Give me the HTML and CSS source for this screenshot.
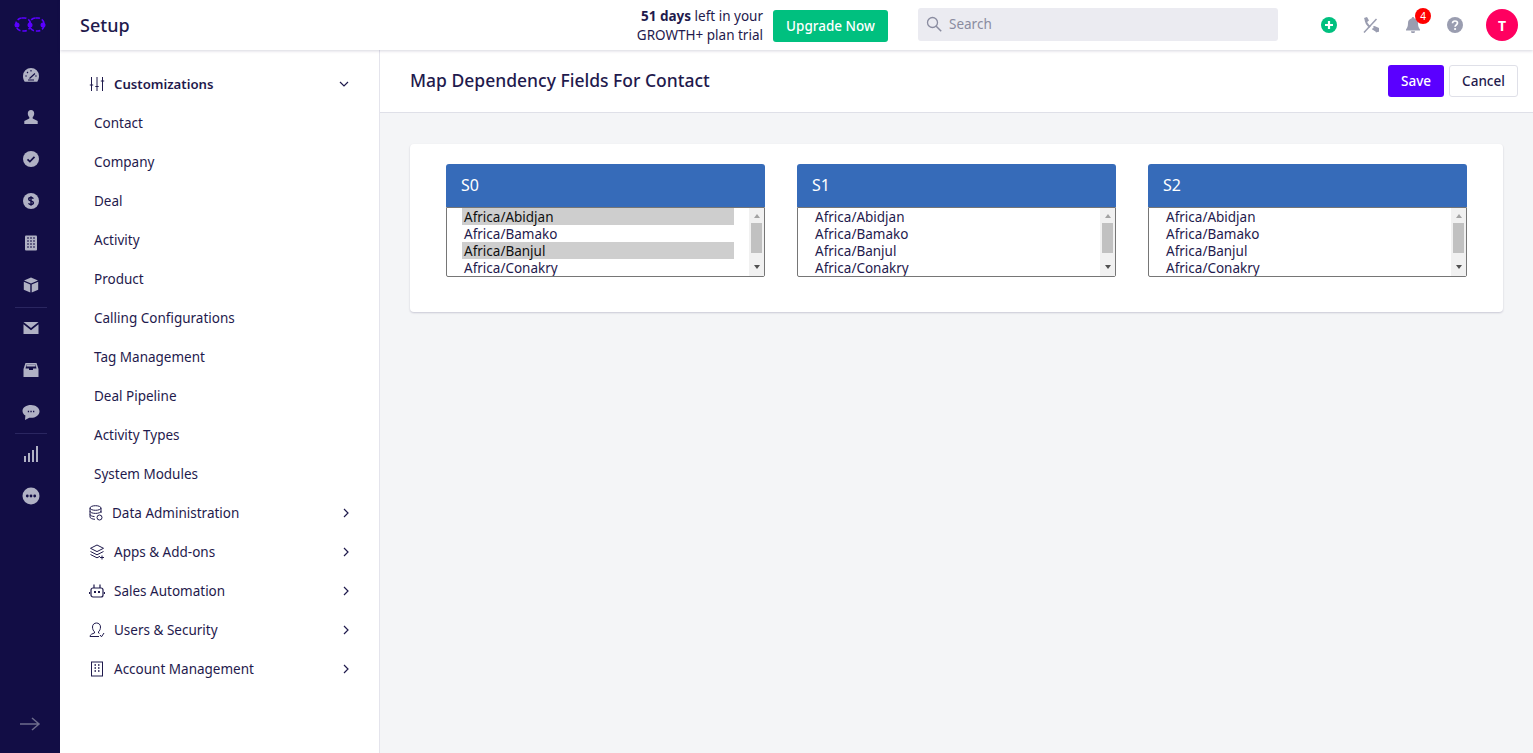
FILE: index.html
```html
<!DOCTYPE html>
<html lang="en">
<head>
<meta charset="utf-8">
<title>Map Dependency Fields For Contact</title>
<link rel="stylesheet" href="styles.css">
</head>
<body>
<div class="app">
  <nav class="rail">
    <svg class="logo" viewBox="0 0 32 15" width="32" height="15"><g fill="none" stroke="#5a00ff" stroke-width="1.600" stroke-dasharray="4.500 2"><rect x="2" y="1" width="14.500" height="13" rx="6"/><rect x="15.500" y="1" width="14.500" height="13" rx="6"/></g><g fill="#5a00ff"><circle cx="3" cy="8" r="2.500"/><circle cx="16" cy="8" r="2.500"/><circle cx="29" cy="8" r="2.500"/></g></svg>
    <div class="rail-group rail-first">
      <a class="rail-item"><svg viewBox="0 0 16 14" width="16" height="14"><path fill="currentColor" d="M8 0a8 8 0 0 0-8 8c0 2.300.7 4.300 1.700 5.800h12.600A10 10 0 0 0 16 8a8 8 0 0 0-8-8z"/><path stroke="#120d45" stroke-width="1.100" fill="none" d="M6.500 10.500l5.500-5M2.300 8h1.500M4 4l1 1M8 2v1.500M13.700 8h-1.500M5 12h6"/></svg></a>
      <a class="rail-item"><svg viewBox="0 0 14 14" width="14" height="14"><path fill="currentColor" d="M7 0C5 0 3.800 1.500 3.800 3.500c0 1.500.6 2.800 1.500 3.600v1.400L.3 11v3h13.400v-3L8.700 8.500V7.100c.9-.8 1.500-2.100 1.500-3.600C10.200 1.500 9 0 7 0z"/></svg></a>
      <a class="rail-item"><svg viewBox="0 0 16 16" width="16" height="16"><circle cx="8" cy="8" r="8" fill="currentColor"/><path d="M4.500 8.300l2.400 2.300 4.600-4.700" fill="none" stroke="#120d45" stroke-width="1.700"/></svg></a>
      <a class="rail-item"><svg viewBox="0 0 16 16" width="16" height="16"><circle cx="8" cy="8" r="8" fill="currentColor"/><path d="M10.300 5.700C10 4.900 9 4.500 8 4.500c-1.300 0-2.300.6-2.300 1.700 0 2.400 4.700 1.200 4.700 3.600 0 1.100-1.100 1.700-2.400 1.700-1.100 0-2.100-.5-2.400-1.300M8 3.200v9.600" fill="none" stroke="#120d45" stroke-width="1.400"/></svg></a>
      <a class="rail-item"><svg viewBox="0 0 16 16" width="16" height="16"><rect x="2" y="0.500" width="12" height="15" rx="1" fill="currentColor"/><path d="M4 3h2M7 3h2M10 3h2M4 6h2M7 6h2M10 6h2M4 9h2M7 9h2M10 9h2M4 12h2M7 12h2M10 12h2" stroke="#120d45" stroke-width="1.200"/></svg></a>
      <a class="rail-item"><svg viewBox="0 0 16 16" width="16" height="16"><path fill="currentColor" d="M8 .5l7 3-7 3-7-3zM.8 4.800l6.500 2.800v8L.8 12.800zM15.200 4.800L8.700 7.600v8l6.500-2.800z"/></svg></a>
    </div>
    <div class="rail-group rail-divided rail-mid">
      <a class="rail-item"><svg viewBox="0 0 16 12" width="16" height="12"><path fill="currentColor" d="M.5 0h15L8 6zM.5 2.300V12h15V2.300L8 8.300z"/></svg></a>
      <a class="rail-item"><svg viewBox="0 0 16 14" width="16" height="14"><path fill="currentColor" d="M2.500 0h11L15.500 6v8H.5V6zM3.500 1.500L2.500 5.500H6V7h4V5.500h3.500L12.500 1.500z"/><path fill="currentColor" d="M3.500 1.500h9v2h-9z"/></svg></a>
      <a class="rail-item"><svg viewBox="0 0 18 15" width="18" height="15"><path fill="currentColor" d="M9 0C4.300 0 .5 2.500.5 6c0 1.900 1.100 3.500 2.900 4.600L3 15l4.300-2.300c.5.100 1.100.1 1.700.1 4.700 0 8.500-2.900 8.500-6.400S13.700 0 9 0z"/><path stroke="#120d45" stroke-width="1.300" stroke-dasharray="1.300 1.300" d="M5.800 6.500h6.500" fill="none"/></svg></a>
    </div>
    <div class="rail-group rail-divided rail-last">
      <a class="rail-item"><svg viewBox="0 0 14 16" width="14" height="16"><path fill="currentColor" d="M0 10h2v6H0zM4 7h2v9H4zM8 4h2v12H8zM12 0h2v16h-2z"/></svg></a>
      <a class="rail-item"><svg viewBox="0 0 18 18" width="18" height="18"><circle cx="9" cy="9" r="8.500" fill="currentColor"/><g fill="#120d45"><circle cx="5.300" cy="9" r="1.400"/><circle cx="9" cy="9" r="1.400"/><circle cx="12.700" cy="9" r="1.400"/></g></svg></a>
    </div>
    <svg class="rail-arrow" viewBox="0 0 22 14" width="22" height="14"><path d="M1 7h19M13 1l7 6-7 6" fill="none" stroke="currentColor" stroke-width="1.500"/></svg>
  </nav>

  <div class="main">
    <header class="topbar">
      <h1 class="app-title">Setup</h1>
      <div class="trial"><div><b>51 days</b> left in your</div><div>GROWTH+ plan trial</div></div>
      <a class="upgrade">Upgrade Now</a>
      <div class="search">
        <svg viewBox="0 0 16 16" width="16" height="16"><circle cx="6.500" cy="6.500" r="5" fill="none" stroke="currentColor" stroke-width="1.300"/><path d="M10.200 10.200l5 5" stroke="currentColor" stroke-width="1.500"/></svg>
        <span>Search</span>
      </div>
      <div class="tools">
        <svg class="tool" viewBox="0 0 16 16" width="16" height="16"><circle cx="8" cy="8" r="8" fill="#00c07f"/><path d="M8 4v8M4 8h8" stroke="#fff" stroke-width="2.200"/></svg>
        <svg class="tool tool-phone" viewBox="0 0 18 16" width="18" height="16"><path d="M3.500 1.500C3.500 5 5.500 8 8 10M10.500 11.500c1.800 1.500 3.500 2.500 6 2.500" fill="none" stroke="#9a9db0" stroke-width="2"/><path fill="#9a9db0" d="M2 1l3-1 2 3.500-2.500 2zM11 9.500l1.500-.5L17 11v3.500l-3 1z"/><path d="M2 15.500L14.500 2" stroke="#9a9db0" stroke-width="1.500"/></svg>
        <div class="bell">
          <svg viewBox="0 0 16 16" width="16" height="16"><path fill="#9a9db0" d="M8 0a1.200 1.200 0 0 0-1.200 1.300C4.400 1.900 3 3.800 3 6c0 3.500-.8 5-2 6.500v1h14v-1c-1.200-1.500-2-3-2-6.500 0-2.200-1.400-4.100-3.800-4.700A1.200 1.200 0 0 0 8 0zM6 14.200a2 2 0 0 0 4 0z"/></svg>
          <span class="badge">4</span>
        </div>
        <svg class="tool tool-help" viewBox="0 0 16 16" width="16" height="16"><circle cx="8" cy="8" r="8" fill="#9a9db0"/><path d="M5.500 6.200C5.600 4.800 6.700 4 8 4c1.400 0 2.500.9 2.500 2.100 0 1.900-2.400 1.800-2.400 3.600" fill="none" stroke="#fff" stroke-width="1.700"/><circle cx="8.100" cy="12" r="1.100" fill="#fff"/></svg>
        <div class="avatar">T</div>
      </div>
    </header>

    <div class="body">
      <aside class="menu">
        <div class="menu-row menu-head">
          <svg class="menu-icon" viewBox="0 0 16 16" width="16" height="16"><path d="M2.500 1v14M8 1v14M13.500 1v14M.8 9h3.400M6.300 10.500h3.400M11.800 5h3.400" stroke="currentColor" fill="none"/></svg>
          <span class="menu-label">Customizations</span>
          <svg class="chev-down" viewBox="0 0 10 6" width="10" height="6"><path d="M1 1l4 4 4-4" fill="none" stroke="currentColor" stroke-width="1.200"/></svg>
        </div>
        <a class="menu-sub">Contact</a>
        <a class="menu-sub">Company</a>
        <a class="menu-sub">Deal</a>
        <a class="menu-sub">Activity</a>
        <a class="menu-sub">Product</a>
        <a class="menu-sub">Calling Configurations</a>
        <a class="menu-sub">Tag Management</a>
        <a class="menu-sub">Deal Pipeline</a>
        <a class="menu-sub">Activity Types</a>
        <a class="menu-sub">System Modules</a>
        <div class="menu-row">
          <svg class="menu-icon tight" viewBox="0 0 14 16" width="14" height="16"><g fill="none" stroke="currentColor"><ellipse cx="6.500" cy="3" rx="5.500" ry="2.300"/><path d="M1 3v9c0 1.200 2.300 2.200 5 2.300M12 3v5M1 6.200c0 1.200 2.500 2.200 5.500 2.200s5.500-1 5.500-2.200M1 9.400c0 1.100 2 2 4.500 2.200"/><circle cx="10.500" cy="12.500" r="2.500"/></g></svg>
          <span class="menu-label">Data Administration</span>
          <svg class="chev" viewBox="0 0 6 10" width="6" height="10"><path d="M1 1l4 4-4 4" fill="none" stroke="currentColor" stroke-width="1.200"/></svg>
        </div>
        <div class="menu-row">
          <svg class="menu-icon" viewBox="0 0 16 16" width="16" height="16"><g fill="none" stroke="currentColor"><path d="M8 1l6.500 3.300L8 7.600 1.500 4.300zM1.500 7.500L8 10.800l6.500-3.300M1.500 10.500L8 13.800l3-1.500"/><path d="M13 11.500v4M11 13.500h4"/></g></svg>
          <span class="menu-label">Apps &amp; Add-ons</span>
          <svg class="chev" viewBox="0 0 6 10" width="6" height="10"><path d="M1 1l4 4-4 4" fill="none" stroke="currentColor" stroke-width="1.200"/></svg>
        </div>
        <div class="menu-row">
          <svg class="menu-icon" viewBox="0 0 16 16" width="16" height="16"><g fill="none" stroke="currentColor" stroke-width="1.200"><rect x="2" y="5" width="12" height="9" rx="2"/><path d="M5 1.500V5M11 1.500V5M.5 9v2M15.500 9v2"/></g><path d="M5 8h2v2H5zM9 8h2v2H9z" fill="currentColor"/></svg>
          <span class="menu-label">Sales Automation</span>
          <svg class="chev" viewBox="0 0 6 10" width="6" height="10"><path d="M1 1l4 4-4 4" fill="none" stroke="currentColor" stroke-width="1.200"/></svg>
        </div>
        <div class="menu-row">
          <svg class="menu-icon" viewBox="0 0 16 16" width="16" height="16"><path d="M1 14.500c0-2 2.500-2.800 4.500-3.500v-1.200C4.300 8.800 3.500 7 3.500 5c0-2.500 1.800-4 4-4s4 1.500 4 4c0 2-.8 3.800-2 4.800V11l1 .4M1 14.500h9M11 13l1.500 1.800L15 11" fill="none" stroke="currentColor"/></svg>
          <span class="menu-label">Users &amp; Security</span>
          <svg class="chev" viewBox="0 0 6 10" width="6" height="10"><path d="M1 1l4 4-4 4" fill="none" stroke="currentColor" stroke-width="1.200"/></svg>
        </div>
        <div class="menu-row">
          <svg class="menu-icon" viewBox="0 0 16 16" width="16" height="16"><rect x="2.500" y="1" width="11" height="14" fill="none" stroke="currentColor"/><path d="M5.500 4h1.500M9 4h1.500M5.500 7h1.500M9 7h1.500M5.500 10h1.500M9 10h1.500" stroke="currentColor" stroke-width="1.300"/></svg>
          <span class="menu-label">Account Management</span>
          <svg class="chev" viewBox="0 0 6 10" width="6" height="10"><path d="M1 1l4 4-4 4" fill="none" stroke="currentColor" stroke-width="1.200"/></svg>
        </div>
      </aside>

      <main class="content">
        <div class="page-head">
          <h2 class="page-title">Map Dependency Fields For Contact</h2>
          <div class="actions">
            <button class="btn btn-save">Save</button>
            <button class="btn btn-cancel">Cancel</button>
          </div>
        </div>
        <section class="card">
          <div class="col">
            <div class="col-head">S0</div>
            <div class="picker-wrap">
              <select class="picker" multiple size="4">
                <option selected>Africa/Abidjan</option>
                <option>Africa/Bamako</option>
                <option selected>Africa/Banjul</option>
                <option>Africa/Conakry</option>
                <option>Africa/Dakar</option>
              </select>
              <div class="scroller"><span class="arrow-up"></span><span class="thumb"></span><span class="arrow-down"></span></div>
            </div>
          </div>
          <div class="col">
            <div class="col-head">S1</div>
            <div class="picker-wrap">
              <select class="picker" multiple size="4">
                <option>Africa/Abidjan</option>
                <option>Africa/Bamako</option>
                <option>Africa/Banjul</option>
                <option>Africa/Conakry</option>
                <option>Africa/Dakar</option>
              </select>
              <div class="scroller"><span class="arrow-up"></span><span class="thumb"></span><span class="arrow-down"></span></div>
            </div>
          </div>
          <div class="col">
            <div class="col-head">S2</div>
            <div class="picker-wrap">
              <select class="picker" multiple size="4">
                <option>Africa/Abidjan</option>
                <option>Africa/Bamako</option>
                <option>Africa/Banjul</option>
                <option>Africa/Conakry</option>
                <option>Africa/Dakar</option>
              </select>
              <div class="scroller"><span class="arrow-up"></span><span class="thumb"></span><span class="arrow-down"></span></div>
            </div>
          </div>
        </section>
      </main>
    </div>
  </div>
</div>
</body>
</html>
```
FILE: styles.css
```css
* { box-sizing: border-box; }
html, body { margin: 0; height: 100%; }
body { font-family: "Noto Sans", "Open Sans", sans-serif; font-size: 13.5px; color: #1f1a4d; overflow: hidden; }
.app { display: flex; height: 753px; }

.rail { width: 60px; flex: none; background: #120d45; color: #b0b1c4; display: flex; flex-direction: column; align-items: center; padding-top: 17px; }
.logo { flex: none; }
.rail-group { display: flex; flex-direction: column; width: 32px; margin-left: 2px; }
.rail-first { margin-top: 22px; padding-bottom: 1px; }
.rail-divided { border-top: 1px solid #2a2660; }
.rail-item { height: 42px; display: flex; align-items: center; justify-content: center; }
.rail-mid .rail-item:first-child { margin-top: -1px; }
.rail-last .rail-item:first-child { height: 40px; }
.rail-last .rail-item:last-child { height: 44px; }
.rail-arrow { margin-top: auto; margin-bottom: 22px; color: #6d6c8c; flex: none; }

.main { flex: 1; min-width: 0; display: flex; flex-direction: column; }
.topbar { height: 50px; flex: none; background: #fff; display: flex; align-items: center; padding: 0 15px 0 20px; box-shadow: 0 1px 3px rgba(31, 26, 77, .18); position: relative; z-index: 2; }
.app-title { margin: 0; font-size: 18px; font-weight: 500; flex: 1; }
.trial { text-align: right; line-height: 19px; margin-top: 1px; }
.trial b { font-weight: 700; }
.upgrade { width: 115px; height: 32px; margin: 2px 0 0 10px; border-radius: 3px; background: #00c07f; color: #fff; display: flex; align-items: center; justify-content: center; font-weight: 500; }
.search { width: 360px; height: 33px; margin: -1px 0 0 30px; background: #ebebf1; border-radius: 3px; display: flex; align-items: center; gap: 7px; padding: 0 0 1px 8px; color: #8a8ca0; }
.tools { display: flex; align-items: center; margin-left: 43px; }
.tool { flex: none; }
.tool-phone { margin-left: 25px; }
.bell { position: relative; width: 16px; height: 16px; margin-left: 25px; }
.bell svg { display: block; }
.tool-help { margin-left: 26px; }
.badge { position: absolute; top: -9px; left: 10px; width: 16px; height: 16px; border-radius: 50%; background: #f00; color: #fff; font-size: 10px; display: flex; align-items: center; justify-content: center; }
.avatar { width: 32px; height: 32px; margin-left: 23px; border-radius: 50%; background: #ff0060; color: #fff; font-size: 14px; font-weight: 700; display: flex; align-items: center; justify-content: center; }

.body { flex: 1; display: flex; min-height: 0; }
.menu { width: 320px; flex: none; background: #fff; border-right: 1px solid #e4e4ec; padding: 14px 0 0 29px; }
.menu-row { height: 39px; display: flex; align-items: center; padding-right: 30px; }
.menu-icon { flex: none; margin-right: 9px; }
.menu-icon.tight { width: 14px; margin-right: 9px; }
.menu-label { flex: 1; }
.menu-head .menu-label { font-size: 13.2px; font-weight: 600; }
.chev { flex: none; }
.chev-down { flex: none; }
.menu-sub { height: 39px; display: flex; align-items: center; padding-left: 5px; }

.content { flex: 1; min-width: 0; background: #f4f5f7; }
.page-head { height: 63px; background: #fff; border-bottom: 1px solid #dfe0e8; display: flex; align-items: center; justify-content: space-between; padding: 0 15px 0 30px; }
.page-title { margin: 0 0 2px; font-size: 17.5px; font-weight: 500; }
.actions { display: flex; gap: 5px; }
.btn { height: 32px; border-radius: 3px; font: inherit; font-weight: 500; cursor: pointer; }
.btn-save { width: 56px; background: #5a00ff; color: #fff; border: 0; }
.btn-cancel { width: 69px; background: #fff; color: #1f1a4d; border: 1px solid #dfe0e8; }

.card { margin: 31px 30px 0; height: 168px; background: #fff; border-radius: 4px; box-shadow: 0 1px 2px rgba(31, 26, 77, .2); padding: 20px 36px 0; display: grid; grid-template-columns: repeat(3, 319px); justify-content: space-between; align-items: start; }
.col { display: flex; flex-direction: column; }
.col-head { height: 43px; background: #366bb9; color: #fff; font-size: 16px; padding: 0 0 2px 15px; display: flex; align-items: center; border-radius: 3px 3px 0 0; }
.picker-wrap { position: relative; }
.picker { display: block; width: 100%; height: 70px; padding: 0 30px 0 15px; margin: 0; font-family: inherit; font-size: 13.5px; color: #1f1a4d; background: #fff; border: 1px solid #767676; border-radius: 0 0 2px 2px; outline: 0; overflow-y: hidden; }
.picker option { display: block; min-height: 17px; height: 17px; padding: 0 2px; line-height: 15px; }
.scroller { position: absolute; top: 1px; right: 1px; bottom: 1px; width: 15px; background: #f1f1f1; display: flex; flex-direction: column; align-items: center; }
.arrow-up { width: 0; height: 0; margin-top: 6px; border: solid transparent; border-width: 0 3.5px 4px; border-bottom-color: #a3a3a3; }
.thumb { width: 11px; height: 30px; margin-top: 5px; background: #c1c1c1; }
.arrow-down { width: 0; height: 0; margin-top: 12px; border: solid transparent; border-width: 4px 3.5px 0; border-top-color: #505050; }
```
